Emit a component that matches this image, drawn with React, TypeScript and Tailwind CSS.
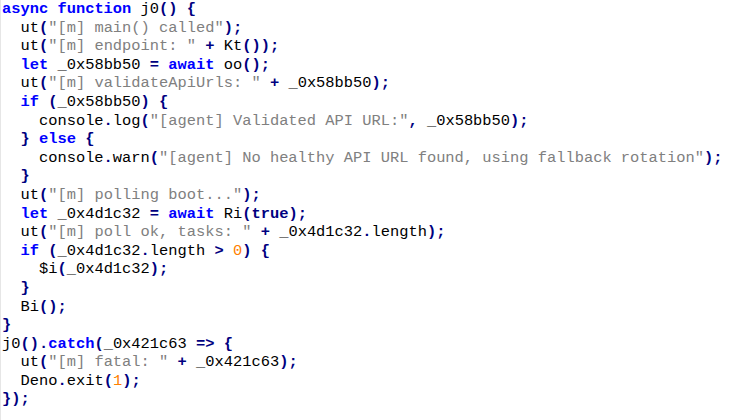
const SOURCE = `async function j0() {
  ut("[m] main() called");
  ut("[m] endpoint: " + Kt());
  let _0x58bb50 = await oo();
  ut("[m] validateApiUrls: " + _0x58bb50);
  if (_0x58bb50) {
    console.log("[agent] Validated API URL:", _0x58bb50);
  } else {
    console.warn("[agent] No healthy API URL found, using fallback rotation");
  }
  ut("[m] polling boot...");
  let _0x4d1c32 = await Ri(true);
  ut("[m] poll ok, tasks: " + _0x4d1c32.length);
  if (_0x4d1c32.length > 0) {
    $i(_0x4d1c32);
  }
  Bi();
}
j0().catch(_0x421c63 => {
  ut("[m] fatal: " + _0x421c63);
  Deno.exit(1);
});`;

type Kind = "str" | "kw" | "lit" | "num" | "id" | "op" | "ws";

// Notepad++ JavaScript colours
const KIND_CLASS: Record<Kind, string> = {
  str: "text-[#808080]",
  kw: "font-bold text-[#0000ff]",
  lit: "font-bold text-[#000080]",
  num: "text-[#ff8000]",
  id: "text-black",
  op: "font-bold text-[#000080]",
  ws: "",
};

const TOKEN =
  /("[^"]*")|(\b(?:async|function|let|await|if|else|catch)\b)|(\btrue\b)|(\b\d+\b)|([A-Za-z_$][\w$]*)|([(){};.,=<>+]+)|(\s+)/g;

function tokenize(line: string) {
  const out: { kind: Kind; text: string }[] = [];
  const kinds: Kind[] = ["str", "kw", "lit", "num", "id", "op", "ws"];
  for (const m of line.matchAll(TOKEN)) {
    const idx = m.slice(1).findIndex((g) => g !== undefined);
    out.push({ kind: kinds[idx], text: m[0] });
  }
  return out;
}

export default function App() {
  const lines = SOURCE.split("\n");
  return (
    <div className="h-[420px] w-[741px] overflow-hidden border-l border-[#e6e6e6] bg-white">
      <pre
        className="m-0 pl-[1px] text-[15.4px] leading-[18.6px] whitespace-pre"
        style={{ fontFamily: '"Liberation Mono", "Courier New", monospace' }}
      >
        {lines.map((line, i) => (
          <div key={i} className="h-[18.6px]">
            {tokenize(line).map((t, j) => (
              <span key={j} className={KIND_CLASS[t.kind]}>
                {t.text}
              </span>
            ))}
          </div>
        ))}
      </pre>
    </div>
  );
}
